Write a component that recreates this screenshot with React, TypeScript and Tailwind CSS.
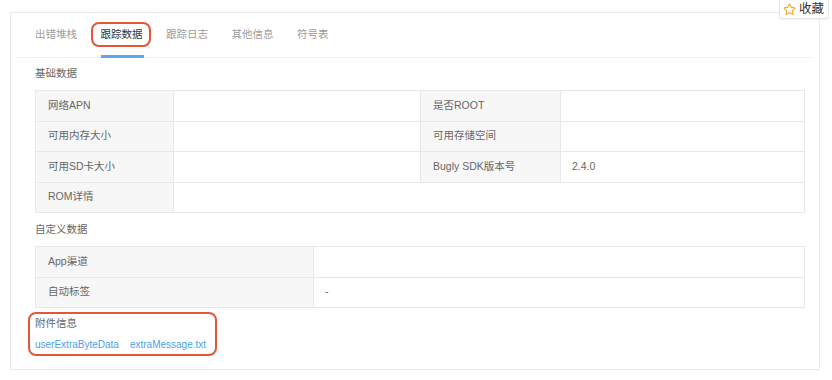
import { Star } from "lucide-react";

const font = { fontFamily: '"Liberation Sans", "Noto Sans CJK SC", sans-serif' };

const tabs = ["出错堆栈", "跟踪数据", "跟踪日志", "其他信息", "符号表"];

function Cell({ label, children, span }: { label?: boolean; children?: React.ReactNode; span?: string }) {
  return (
    <div
      className={`h-[30.5px] flex items-center border-r border-b border-[#e8e8e8] text-[10.5px] ${
        label ? "bg-[#f7f7f7] text-[#666] pl-[12px]" : "bg-white text-[#666] pl-[11px]"
      } ${span ?? ""}`}
    >
      {children}
    </div>
  );
}

export default function App() {
  return (
    <div className="relative w-[832px] h-[380px] bg-white" style={font}>
      {/* favourite button */}
      <div className="absolute right-[3px] top-0 z-10 flex items-center gap-[3px] h-[19px] pl-[3px] pr-[4px] bg-white border border-t-0 border-[#e6e6e6] rounded-b-[2px] shadow-[0_1px_2px_rgba(0,0,0,0.06)]">
        <Star className="w-[13px] h-[13px] text-[#f5a623]" strokeWidth={2} />
        <span className="text-[12.5px] text-[#333] leading-none">收藏</span>
      </div>

      <div className="absolute left-[10px] top-[12px] w-[810px] h-[358px] border border-[#ebebeb] bg-white">
        {/* Tabs */}
        <div className="ml-[6px] mr-[7px] h-[45px] border-b border-[#efefef] flex pl-[18px] gap-[23.5px]">
          {tabs.map((t, i) => (
            <div key={t} className="relative h-full flex items-center">
              <span className={`text-[10.5px] ${i === 1 ? "text-[#333]" : "text-[#9c9c9c]"}`}>{t}</span>
              {i === 1 && (
                <>
                  <div className="absolute left-[-10px] right-[-8px] top-[9px] h-[25px] border-2 border-[#e4553a] rounded-[8px]" />
                  <div className="absolute left-0 right-[-1px] bottom-[-1px] h-[3px] bg-[#5aa6f0]" />
                </>
              )}
            </div>
          ))}
        </div>

        <div className="pl-[24px] pr-[14px]">
          <div className="mt-[7px] leading-[16px] text-[10.5px] text-[#666]">基础数据</div>
          <div className="mt-[9px] grid grid-cols-[138px_247px_140px_1fr] border-t border-l border-[#e8e8e8]">
            <Cell label>网络APN</Cell>
            <Cell />
            <Cell label>是否ROOT</Cell>
            <Cell />
            <Cell label>可用内存大小</Cell>
            <Cell />
            <Cell label>可用存储空间</Cell>
            <Cell />
            <Cell label>可用SD卡大小</Cell>
            <Cell />
            <Cell label>Bugly SDK版本号</Cell>
            <Cell>2.4.0</Cell>
            <Cell label>ROM详情</Cell>
            <Cell span="col-span-3" />
          </div>

          <div className="mt-[8px] leading-[16px] text-[10.5px] text-[#666]">自定义数据</div>
          <div className="mt-[9px] grid grid-cols-[278px_1fr] border-t border-l border-[#e8e8e8]">
            <Cell label>App渠道</Cell>
            <Cell />
            <Cell label>自动标签</Cell>
            <Cell>-</Cell>
          </div>

          {/* Attachments */}
          <div className="mt-[4px] ml-[-7px] w-[189px] border-2 border-[#e4553a] rounded-[8px] pl-[5px] pt-[1px] pb-[1px]">
            <div className="leading-[16px] text-[10.5px] text-[#666]">附件信息</div>
            <div className="mt-[6px] leading-[16px] text-[10px] text-[#4a9ff0] flex gap-[11px]">
              <span>userExtraByteData</span>
              <span>extraMessage.txt</span>
            </div>
          </div>
        </div>
      </div>
    </div>
  );
}
